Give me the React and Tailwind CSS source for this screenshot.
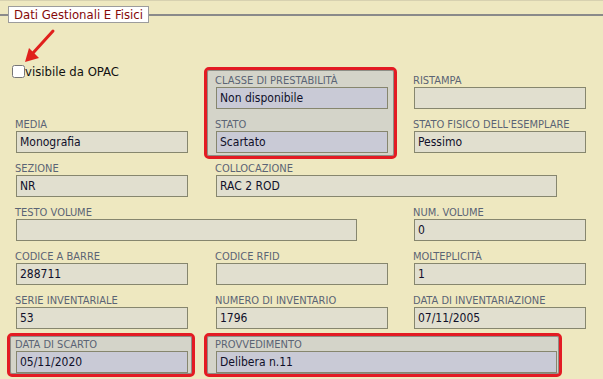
import React from 'react';

const font = "font-['DejaVu_Sans_Condensed','DejaVu_Sans',sans-serif]";

const Field = ({ label, value = '', wide, hl }) => (
  <div>
    <div className="h-[12px] text-[11px] leading-[12px] text-[#5b6475] whitespace-nowrap">{label}</div>
    <div
      className={`ml-px h-[22px] border border-[#86866e] px-[3px] text-[12px] leading-[20px] text-[#10102a] whitespace-nowrap ${hl ? 'bg-[#c9cad6]' : 'bg-[#e1dfcf]'} ${wide ? 'w-[341px]' : 'w-[172px]'}`}
    >
      {value}
    </div>
  </div>
);

const App = () => {
  return (
    <div className={`relative min-h-[379px] w-[603px] overflow-hidden border-t border-[#d7d1b0] bg-[#eee8c0] ${font}`}>
      <fieldset className="mt-[5px] border-0 border-t-2 border-[#8a8a8a] px-[8px]">
        <legend className="border border-[#9c9c9c] bg-white px-[5px] text-[13px] leading-[15px] text-[#860808]">
          Dati Gestionali E Fisici
        </legend>

        <div className="ml-[7px] mt-[52px] grid grid-cols-[200px_198px_173px] gap-y-[10px]">
          {/* row 0 */}
          <label className="col-start-1 row-start-1 -ml-[3px] -mt-[10px] flex items-center self-start text-[13px] leading-[13px] text-[#111]">
            <input type="checkbox" className="m-0 h-[13px] w-[13px]" />
            <span>visibile da OPAC</span>
          </label>

          <div className="col-start-2 row-start-1 row-span-2 -ml-[11px] -mt-[8px] -mb-[6px] flex w-[193px] flex-col gap-[10px] rounded-[5px] border-[3px] border-[#e31b23] bg-[#d4d4c9] pl-[8px] pt-[5px] pb-[3px] shadow-[inset_0_0_0_1px_#8e8e86]">
            <Field label="CLASSE DI PRESTABILITÀ" value="Non disponibile" hl />
            <Field label="STATO" value="Scartato" hl />
          </div>

          <div className="col-start-3 row-start-1">
            <Field label="RISTAMPA" />
          </div>

          {/* row 1 */}
          <div className="col-start-1 row-start-2">
            <Field label="MEDIA" value="Monografia" />
          </div>
          <div className="col-start-3 row-start-2">
            <Field label="STATO FISICO DELL'ESEMPLARE" value="Pessimo" />
          </div>

          {/* row 2 */}
          <div className="col-start-1 row-start-3">
            <Field label="SEZIONE" value="NR" />
          </div>
          <div className="col-start-2 col-span-2 row-start-3">
            <Field label="COLLOCAZIONE" value="RAC 2 ROD" wide />
          </div>

          {/* row 3 */}
          <div className="col-start-1 col-span-2 row-start-4">
            <Field label="TESTO VOLUME" wide />
          </div>
          <div className="col-start-3 row-start-4">
            <Field label="NUM. VOLUME" value="0" />
          </div>

          {/* row 4 */}
          <div className="col-start-1 row-start-5">
            <Field label="CODICE A BARRE" value="288711" />
          </div>
          <div className="col-start-2 row-start-5">
            <Field label="CODICE RFID" />
          </div>
          <div className="col-start-3 row-start-5">
            <Field label="MOLTEPLICITÀ" value="1" />
          </div>

          {/* row 5 */}
          <div className="col-start-1 row-start-6">
            <Field label="SERIE INVENTARIALE" value="53" />
          </div>
          <div className="col-start-2 row-start-6">
            <Field label="NUMERO DI INVENTARIO" value="1796" />
          </div>
          <div className="col-start-3 row-start-6">
            <Field label="DATA DI INVENTARIAZIONE" value="07/11/2005" />
          </div>

          {/* row 6 */}
          <div className="col-start-1 row-start-7 -ml-[8px] -mt-[6px] -mb-[4px] w-[188px] rounded-[5px] border-[3px] border-[#e31b23] bg-[#d4d4c9] pl-[5px] pt-[3px] pb-[1px] shadow-[inset_0_0_0_1px_#8e8e86]">
            <Field label="DATA DI SCARTO" value="05/11/2020" hl />
          </div>
          <div className="col-start-2 col-span-2 row-start-7 -ml-[11px] -mt-[6px] -mb-[4px] w-[358px] rounded-[5px] border-[3px] border-[#e31b23] bg-[#d4d4c9] pl-[8px] pt-[3px] pb-[1px] shadow-[inset_0_0_0_1px_#8e8e86]">
            <Field label="PROVVEDIMENTO" value="Delibera n.11" wide hl />
          </div>
        </div>
      </fieldset>

      {/* annotation arrow */}
      <svg className="absolute left-0 top-0" width="60" height="66" viewBox="0 0 60 66">
        <line x1="53" y1="30" x2="33" y2="52" stroke="#e0201c" strokeWidth="3" strokeLinecap="round" />
        <polygon points="25,61 29,47 39,57" fill="#e0201c" />
      </svg>
    </div>
  );
};

export default App;
